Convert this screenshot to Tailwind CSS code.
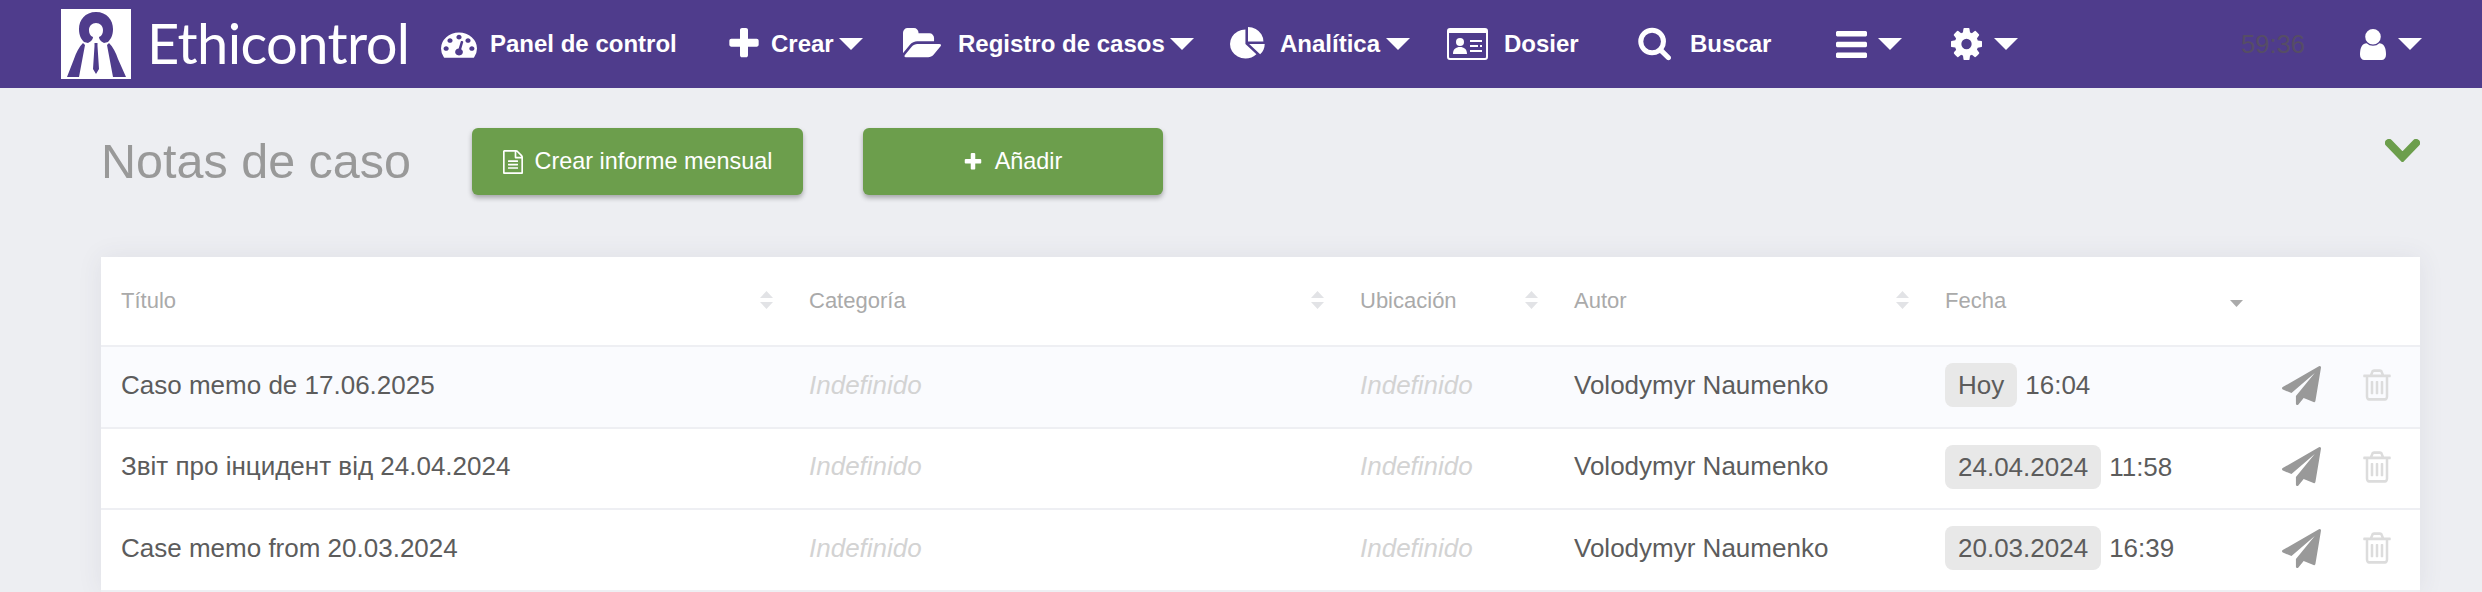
<!DOCTYPE html>
<html lang="es">
<head>
    <meta charset="UTF-8">
    <title>Notas de caso</title>
    <script src="https://cdn.jsdelivr.net/npm/@tailwindcss/browser@4"></script>
</head>
<body class="bg-[#edeef2] h-[592px] overflow-hidden font-['Liberation_Sans',Arial,sans-serif]">

    <!-- top nav -->
    <nav class="h-[88px] bg-[#4f3c8c] flex items-center pl-[61px] text-white text-[24px] font-bold">
        <svg class="w-[70px] h-[70px] shrink-0" viewBox="0 0 70 70">
            <rect width="70" height="70" fill="#fff"/>
            <path d="M35 3C24 3 18 11 18 20C18 26 20 30 23 33L27 34C29 33 32 31 32 28C29 27 28 24 28 21C28 17 31 14 35 14C39 14 42 17 42 21C42 24 41 27 38 28C38 31 41 33 43 34L47 33C50 30 52 26 52 20C52 11 46 3 35 3Z" fill="#4f3c8c"/>
            <path d="M22 34C18 38 15 44 13 50L6 68H18L24 36ZM48 34C52 38 55 44 57 50L65 68H52L46 36Z" fill="#4f3c8c"/>
            <path d="M33.500 34H36.500V37L38 60L35 65L32 60L33.500 37Z" fill="#4f3c8c"/>
        </svg>
        <span class="w-[290px] shrink-0 ml-[16px] mr-[4px] text-[56px] font-normal font-['Lato',sans-serif] leading-none tracking-[-0.6px] -mt-[2px]">Ethicontrol</span>

        <a class="w-[287px] shrink-0 flex items-center">
            <svg class="w-[36px] h-[32px] mr-[13px]" viewBox="0 0 1792 1792" preserveAspectRatio="none" fill="#fff"><path d="M384 1152q0-53-37.500-90.500t-90.500-37.500-90.500 37.500-37.500 90.500 37.500 90.500 90.500 37.500 90.500-37.500 37.500-90.500zm192-448q0-53-37.500-90.500t-90.500-37.500-90.500 37.500-37.500 90.500 37.500 90.500 90.500 37.500 90.500-37.500 37.500-90.500zm428 481l101-382q6-26-7.500-48.500t-38.500-29.500-48 7-30 39l-101 382q-60 5-107 43.500t-63 98.500q-20 77 20 146t117 89 146-20 89-117q16-60-6-117t-72-91zm660-33q0-53-37.500-90.500t-90.500-37.500-90.500 37.500-37.500 90.500 37.500 90.500 90.500 37.500 90.500-37.500 37.500-90.500zm-640-640q0-53-37.500-90.500t-90.500-37.500-90.500 37.500-37.500 90.500 37.500 90.500 90.500 37.500 90.500-37.500 37.500-90.500zm448 192q0-53-37.500-90.500t-90.500-37.500-90.500 37.500-37.500 90.500 37.500 90.500 90.500 37.500 90.500-37.500 37.500-90.500zm320 448q0 261-141 483-19 29-54 29h-1402q-35 0-54-29-141-221-141-483 0-182 71-348t191-286 286-191 348-71 348 71 286 191 191 286 71 348z"/></svg>
            <span>Panel de control</span>
        </a>
        <a class="w-[175px] shrink-0 flex items-center">
            <svg class="w-[32px] h-[32px] mr-[11px]" viewBox="128 128 1536 1536" fill="#fff"><path d="M1600 736v192q0 40-28 68t-68 28h-416v416q0 40-28 68t-68 28h-192q-40 0-68-28t-28-68v-416h-416q-40 0-68-28t-28-68v-192q0-40 28-68t68-28h416v-416q0-40 28-68t68-28h192q40 0 68 28t28 68v416h416q40 0 68 28t28 68z"/></svg>
            <span>Crear</span>
            <svg class="w-[24px] h-[12px] ml-[5px]" viewBox="0 0 24 12" fill="#fff"><path d="M0 0H24L12 12Z"/></svg>
        </a>
        <a class="w-[327px] shrink-0 flex items-center">
            <svg class="w-[38px] h-[32px] mr-[17px]" viewBox="0 128 1880 1536" preserveAspectRatio="none" fill="#fff"><path d="M1879 952q0 31-31 66l-336 396q-43 51-120.500 86.500t-143.500 35.500h-1088q-34 0-60.500-13t-26.500-43q0-31 31-66l336-396q43-51 120.500-86.500t143.500-35.500h1088q34 0 60.500 13t26.500 43zm-343-344v160h-832q-94 0-197 47.500t-164 119.500l-337 396-5 6q0-4-.5-12.500t-.5-12.500v-960q0-92 66-158t158-66h320q92 0 158 66t66 158v32h544q92 0 158 66t66 158z"/></svg>
            <span>Registro de casos</span>
            <svg class="w-[24px] h-[12px] ml-[5px]" viewBox="0 0 24 12" fill="#fff"><path d="M0 0H24L12 12Z"/></svg>
        </a>
        <a class="w-[217px] shrink-0 flex items-center">
            <svg class="w-[36px] h-[34px] mr-[14px]" viewBox="0 0 1792 1792" preserveAspectRatio="none" fill="#fff"><path d="M768 890l546 546q-106 108-247.500 168t-298.500 60q-209 0-385.500-103t-279.500-279.500-103-385.500 103-385.500 279.500-279.500 385.500-103v762zm187 6h773q0 157-60 298.500t-168 247.500l-545-546zm709-128h-768v-768q209 0 385.500 103t279.500 279.500 103 385.500z"/></svg>
            <span>Analítica</span>
            <svg class="w-[24px] h-[12px] ml-[6px]" viewBox="0 0 24 12" fill="#fff"><path d="M0 0H24L12 12Z"/></svg>
        </a>
        <a class="w-[190px] shrink-0 flex items-center">
            <svg class="w-[41px] h-[32px] mr-[16px]" viewBox="0 0 41 32" fill="#fff"><path fill-rule="evenodd" d="M3 0H38A3 3 0 0 1 41 3V29A3 3 0 0 1 38 32H3A3 3 0 0 1 0 29V3A3 3 0 0 1 3 0ZM2 5V29A1 1 0 0 0 3 30H38A1 1 0 0 0 39 29V5Z"/><circle cx="13" cy="14" r="4"/><path d="M6 26C6 21 9 19 13 19C17 19 20 21 20 26ZM23 12H35V14H23ZM23 17H31V19H23ZM33 17H35V19H33ZM23 22H35V24H23Z"/></svg>
            <span>Dosier</span>
        </a>
        <a class="w-[199px] shrink-0 flex items-center">
            <svg class="w-[34px] h-[34px] mr-[19px]" viewBox="0 128 1728 1664" fill="#fff"><path d="M1216 832q0-185-131.500-316.500t-316.500-131.500-316.500 131.500-131.500 316.500 131.500 316.500 316.500 131.500 316.500-131.500 131.500-316.500zm512 832q0 52-38 90t-90 38q-54 0-90-38l-343-342q-179 124-399 124-143 0-273.500-55.500t-225-150-150-225-55.500-273.500 55.500-273.500 150-225 225-150 273.500-55.500 273.500 55.500 225 150 150 225 55.500 273.500q0 220-124 399l343 343q37 37 37 90z"/></svg>
            <span>Buscar</span>
        </a>
        <a class="w-[115px] shrink-0 flex items-center">
            <svg class="w-[31px] h-[27px] mr-[11px]" viewBox="128 256 1536 1280" preserveAspectRatio="none" fill="#fff"><path d="M1664 1344v128q0 26-19 45t-45 19h-1408q-26 0-45-19t-19-45v-128q0-26 19-45t45-19h1408q26 0 45 19t19 45zm0-512v128q0 26-19 45t-45 19h-1408q-26 0-45-19t-19-45v-128q0-26 19-45t45-19h1408q26 0 45 19t19 45zm0-512v128q0 26-19 45t-45 19h-1408q-26 0-45-19t-19-45v-128q0-26 19-45t45-19h1408q26 0 45 19t19 45z"/></svg>
            <svg class="w-[24px] h-[12px]" viewBox="0 0 24 12" fill="#fff"><path d="M0 0H24L12 12Z"/></svg>
        </a>
        <a class="w-[290px] shrink-0 flex items-center">
            <svg class="w-[31px] h-[32px] mr-[12px]" viewBox="128 128 1536 1536" preserveAspectRatio="none" fill="#fff"><path d="M1152 896q0-106-75-181t-181-75-181 75-75 181 75 181 181 75 181-75 75-181zm512-109v222q0 12-8 23t-20 13l-185 28q-19 54-39 91 35 50 107 138 10 12 10 25t-9 23q-27 37-99 108t-94 71q-12 0-26-9l-138-108q-44 23-91 38-16 136-29 186-7 28-36 28h-222q-14 0-24.500-8.500t-11.500-21.500l-28-184q-49-16-90-37l-141 107q-10 9-25 9-14 0-25-11-126-114-165-168-7-10-7-23 0-12 8-23 15-21 51-66.500t54-70.500q-27-50-41-99l-183-27q-13-2-21-12.500t-8-23.500v-222q0-12 8-23t19-13l186-28q14-46 39-92-40-57-107-138-10-12-10-24 0-10 9-23 26-36 98.500-107.500t94.500-71.500q13 0 26 10l138 107q44-23 91-38 16-136 29-186 7-28 36-28h222q14 0 24.500 8.500t11.500 21.500l28 184q49 16 90 37l142-107q9-9 24-9 13 0 25 10 129 119 165 170 7 8 7 22 0 12-8 23-15 21-51 66.500t-54 70.500q26 50 41 98l183 28q13 2 21 12.500t8 23.500z"/></svg>
            <svg class="w-[24px] h-[12px]" viewBox="0 0 24 12" fill="#fff"><path d="M0 0H24L12 12Z"/></svg>
        </a>
        <span class="w-[119px] shrink-0 text-[25.6px] font-normal text-[#564d66]">59:36</span>
        <a class="shrink-0 flex items-center">
            <svg class="w-[26px] h-[31px] mr-[12px]" viewBox="256 128 1280 1536" preserveAspectRatio="none" fill="#fff"><path d="M1536 1399q0 109-62.500 187t-150.500 78h-854q-88 0-150.500-78t-62.500-187q0-85 8.500-160.500t31.500-152 58.500-131 94-89 134.500-34.500q131 128 313 128t313-128q76 0 134.500 34.500t94 89 58.500 131 31.500 152 8.500 160.500zm-256-887q0 159-112.500 271.500t-271.500 112.500-271.500-112.500-112.500-271.500 112.500-271.500 271.500-112.500 271.500 112.500 112.500 271.500z"/></svg>
            <svg class="w-[24px] h-[12px]" viewBox="0 0 24 12" fill="#fff"><path d="M0 0H24L12 12Z"/></svg>
        </a>
    </nav>

    <main class="pl-[101px] pr-[62px]">
        <!-- page title + actions -->
        <div class="flex items-start pt-[40px] h-[169px]">
            <h1 class="text-[48.5px] leading-[67px] text-[#999] font-normal w-[371px]">Notas de caso</h1>
            <button class="w-[331px] h-[67px] rounded-[6px] bg-[#6c9e4c] text-white text-[23.4px] flex items-center justify-center shadow-[0_3px_5px_rgba(0,0,0,0.3)]">
                <svg class="w-[20px] h-[24px] mr-[12px]" viewBox="128 0 1536 1792" preserveAspectRatio="none" fill="#fff"><path d="M1596 380q28 28 48 76t20 88v1152q0 40-28 68t-68 28h-1344q-40 0-68-28t-28-68v-1600q0-40 28-68t68-28h896q40 0 88 20t76 48zm-444-244v376h376q-10-29-22-41l-313-313q-12-12-41-22zm384 1528v-1024h-416q-40 0-68-28t-28-68v-416h-768v1536h1280zm-1024-864q0-14 9-23t23-9h704q14 0 23 9t9 23v64q0 14-9 23t-23 9h-704q-14 0-23-9t-9-23v-64zm736 224q14 0 23 9t9 23v64q0 14-9 23t-23 9h-704q-14 0-23-9t-9-23v-64q0-14 9-23t23-9h704zm0 256q14 0 23 9t9 23v64q0 14-9 23t-23 9h-704q-14 0-23-9t-9-23v-64q0-14 9-23t23-9h704z"/></svg>
                Crear informe mensual
            </button>
            <button class="w-[300px] h-[67px] ml-[60px] rounded-[6px] bg-[#6c9e4c] text-white text-[23.4px] flex items-center justify-center shadow-[0_3px_5px_rgba(0,0,0,0.3)]">
                <svg class="w-[18px] h-[18px] mr-[13px]" viewBox="128 128 1536 1536" fill="#fff"><path d="M1600 736v192q0 40-28 68t-68 28h-416v416q0 40-28 68t-68 28h-192q-40 0-68-28t-28-68v-416h-416q-40 0-68-28t-28-68v-192q0-40 28-68t68-28h416v-416q0-40 28-68t68-28h192q40 0 68 28t28 68v416h416q40 0 68 28t28 68z"/></svg>
                Añadir
            </button>
            <svg class="w-[35px] h-[23px] ml-auto mt-[11px]" viewBox="0 0 35 23" fill="none" stroke="#6c9e4c" stroke-width="8" stroke-linecap="round"><path d="M4 4L17.500 18L31 4"/></svg>
        </div>

        <!-- notes table -->
        <table class="w-full table-fixed border-collapse bg-white shadow-[0_0_24px_rgba(60,60,90,0.08)]">
            <thead>
                <tr class="h-[89px] border-b-2 border-[#eeeff3] text-[22px] text-[#aaa] text-left">
                    <th class="w-[688px] pl-[20px] pr-[16px] pb-[2px] font-normal">
                        <div class="flex items-center justify-between">Título
                            <svg class="w-[13px] h-[18px]" viewBox="0 0 13 18" fill="#e2e3e6"><path d="M6.500 0L13 7H0ZM0 11H13L6.500 18Z"/></svg>
                        </div>
                    </th>
                    <th class="w-[551px] pl-[20px] pr-[16px] pb-[2px] font-normal">
                        <div class="flex items-center justify-between">Categoría
                            <svg class="w-[13px] h-[18px]" viewBox="0 0 13 18" fill="#e2e3e6"><path d="M6.500 0L13 7H0ZM0 11H13L6.500 18Z"/></svg>
                        </div>
                    </th>
                    <th class="w-[214px] pl-[20px] pr-[16px] pb-[2px] font-normal">
                        <div class="flex items-center justify-between">Ubicación
                            <svg class="w-[13px] h-[18px]" viewBox="0 0 13 18" fill="#e2e3e6"><path d="M6.500 0L13 7H0ZM0 11H13L6.500 18Z"/></svg>
                        </div>
                    </th>
                    <th class="w-[371px] pl-[20px] pr-[16px] pb-[2px] font-normal">
                        <div class="flex items-center justify-between">Autor
                            <svg class="w-[13px] h-[18px]" viewBox="0 0 13 18" fill="#e2e3e6"><path d="M6.500 0L13 7H0ZM0 11H13L6.500 18Z"/></svg>
                        </div>
                    </th>
                    <th class="w-[338px] pl-[20px] pr-[20px] pb-[2px] font-normal">
                        <div class="flex items-center justify-between">Fecha
                            <svg class="w-[13px] h-[7px] mt-[6px]" viewBox="0 0 13 7" fill="#aaa"><path d="M0 0H13L6.500 7Z"/></svg>
                        </div>
                    </th>
                    <th></th>
                </tr>
            </thead>
            <tbody class="text-[26px] text-[#5c5c5c]">
                <tr class="h-[81.5px] border-b-2 border-[#eeeff3] bg-[#fafbfe]">
                    <td class="pl-[20px] pb-[3px]">Caso memo de 17.06.2025</td>
                    <td class="pl-[20px] pb-[3px] italic text-[#d3d3d3]">Indefinido</td>
                    <td class="pl-[20px] pb-[3px] italic text-[#d3d3d3]">Indefinido</td>
                    <td class="pl-[20px] pb-[3px]">Volodymyr Naumenko</td>
                    <td class="pl-[20px] pb-[3px]"><span class="inline-block h-[44px] leading-[44px] px-[13px] mr-[8px] rounded-[8px] bg-[#e8e8e8]">Hoy</span>16:04</td>
                    <td class="pr-[28px] pb-[3px]">
                        <div class="flex items-center justify-end">
                            <svg class="w-[39px] h-[39px] mr-[41px]" viewBox="0 0 1792 1792" fill="#999"><path d="M1764 11q33 24 27 64l-256 1536q-5 29-32 45-14 8-31 8-11 0-24-5l-453-185-242 295q-18 23-49 23-13 0-22-4-19-7-30.500-23.500t-11.500-36.500v-349l864-1059-1069 925-395-162q-37-14-40-55-2-40 32-59l1664-960q15-9 32-9 19 0 36 11z"/></svg>
                            <svg class="w-[30px] h-[34px]" viewBox="128 64 1536 1664" preserveAspectRatio="none" fill="#dcdcdc"><path d="M704 736v576q0 14-9 23t-23 9h-64q-14 0-23-9t-9-23v-576q0-14 9-23t23-9h64q14 0 23 9t9 23zm256 0v576q0 14-9 23t-23 9h-64q-14 0-23-9t-9-23v-576q0-14 9-23t23-9h64q14 0 23 9t9 23zm256 0v576q0 14-9 23t-23 9h-64q-14 0-23-9t-9-23v-576q0-14 9-23t23-9h64q14 0 23 9t9 23zm128 724v-948h-896v948q0 22 7 40.500t14.500 27 10.500 8.500h832q3 0 10.500-8.500t14.500-27 7-40.500zm-672-1076h448l-48-117q-7-9-17-11h-317q-10 2-17 11zm928 32v64q0 14-9 23t-23 9h-96v948q0 83-47 143.500t-113 60.500h-832q-66 0-113-58.500t-47-141.500v-952h-96q-14 0-23-9t-9-23v-64q0-14 9-23t23-9h309l70-167q15-37 54-63t79-26h320q40 0 79 26t54 63l70 167h309q14 0 23 9t9 23z"/></svg>
                        </div>
                    </td>
                </tr>
                <tr class="h-[81.5px] border-b-2 border-[#eeeff3]">
                    <td class="pl-[20px] pb-[3px]">Звіт про інцидент від 24.04.2024</td>
                    <td class="pl-[20px] pb-[3px] italic text-[#d3d3d3]">Indefinido</td>
                    <td class="pl-[20px] pb-[3px] italic text-[#d3d3d3]">Indefinido</td>
                    <td class="pl-[20px] pb-[3px]">Volodymyr Naumenko</td>
                    <td class="pl-[20px] pb-[3px]"><span class="inline-block h-[44px] leading-[44px] px-[13px] mr-[8px] rounded-[8px] bg-[#e8e8e8]">24.04.2024</span>11:58</td>
                    <td class="pr-[28px] pb-[3px]">
                        <div class="flex items-center justify-end">
                            <svg class="w-[39px] h-[39px] mr-[41px]" viewBox="0 0 1792 1792" fill="#999"><path d="M1764 11q33 24 27 64l-256 1536q-5 29-32 45-14 8-31 8-11 0-24-5l-453-185-242 295q-18 23-49 23-13 0-22-4-19-7-30.500-23.500t-11.500-36.500v-349l864-1059-1069 925-395-162q-37-14-40-55-2-40 32-59l1664-960q15-9 32-9 19 0 36 11z"/></svg>
                            <svg class="w-[30px] h-[34px]" viewBox="128 64 1536 1664" preserveAspectRatio="none" fill="#dcdcdc"><path d="M704 736v576q0 14-9 23t-23 9h-64q-14 0-23-9t-9-23v-576q0-14 9-23t23-9h64q14 0 23 9t9 23zm256 0v576q0 14-9 23t-23 9h-64q-14 0-23-9t-9-23v-576q0-14 9-23t23-9h64q14 0 23 9t9 23zm256 0v576q0 14-9 23t-23 9h-64q-14 0-23-9t-9-23v-576q0-14 9-23t23-9h64q14 0 23 9t9 23zm128 724v-948h-896v948q0 22 7 40.500t14.500 27 10.500 8.500h832q3 0 10.500-8.500t14.500-27 7-40.500zm-672-1076h448l-48-117q-7-9-17-11h-317q-10 2-17 11zm928 32v64q0 14-9 23t-23 9h-96v948q0 83-47 143.500t-113 60.500h-832q-66 0-113-58.500t-47-141.500v-952h-96q-14 0-23-9t-9-23v-64q0-14 9-23t23-9h309l70-167q15-37 54-63t79-26h320q40 0 79 26t54 63l70 167h309q14 0 23 9t9 23z"/></svg>
                        </div>
                    </td>
                </tr>
                <tr class="h-[81.5px] border-b-2 border-[#eeeff3]">
                    <td class="pl-[20px] pb-[3px]">Case memo from 20.03.2024</td>
                    <td class="pl-[20px] pb-[3px] italic text-[#d3d3d3]">Indefinido</td>
                    <td class="pl-[20px] pb-[3px] italic text-[#d3d3d3]">Indefinido</td>
                    <td class="pl-[20px] pb-[3px]">Volodymyr Naumenko</td>
                    <td class="pl-[20px] pb-[3px]"><span class="inline-block h-[44px] leading-[44px] px-[13px] mr-[8px] rounded-[8px] bg-[#e8e8e8]">20.03.2024</span>16:39</td>
                    <td class="pr-[28px] pb-[3px]">
                        <div class="flex items-center justify-end">
                            <svg class="w-[39px] h-[39px] mr-[41px]" viewBox="0 0 1792 1792" fill="#999"><path d="M1764 11q33 24 27 64l-256 1536q-5 29-32 45-14 8-31 8-11 0-24-5l-453-185-242 295q-18 23-49 23-13 0-22-4-19-7-30.500-23.500t-11.500-36.500v-349l864-1059-1069 925-395-162q-37-14-40-55-2-40 32-59l1664-960q15-9 32-9 19 0 36 11z"/></svg>
                            <svg class="w-[30px] h-[34px]" viewBox="128 64 1536 1664" preserveAspectRatio="none" fill="#dcdcdc"><path d="M704 736v576q0 14-9 23t-23 9h-64q-14 0-23-9t-9-23v-576q0-14 9-23t23-9h64q14 0 23 9t9 23zm256 0v576q0 14-9 23t-23 9h-64q-14 0-23-9t-9-23v-576q0-14 9-23t23-9h64q14 0 23 9t9 23zm256 0v576q0 14-9 23t-23 9h-64q-14 0-23-9t-9-23v-576q0-14 9-23t23-9h64q14 0 23 9t9 23zm128 724v-948h-896v948q0 22 7 40.500t14.500 27 10.500 8.500h832q3 0 10.500-8.500t14.500-27 7-40.500zm-672-1076h448l-48-117q-7-9-17-11h-317q-10 2-17 11zm928 32v64q0 14-9 23t-23 9h-96v948q0 83-47 143.500t-113 60.500h-832q-66 0-113-58.500t-47-141.500v-952h-96q-14 0-23-9t-9-23v-64q0-14 9-23t23-9h309l70-167q15-37 54-63t79-26h320q40 0 79 26t54 63l70 167h309q14 0 23 9t9 23z"/></svg>
                        </div>
                    </td>
                </tr>
            </tbody>
        </table>
    </main>
</body>
</html>
